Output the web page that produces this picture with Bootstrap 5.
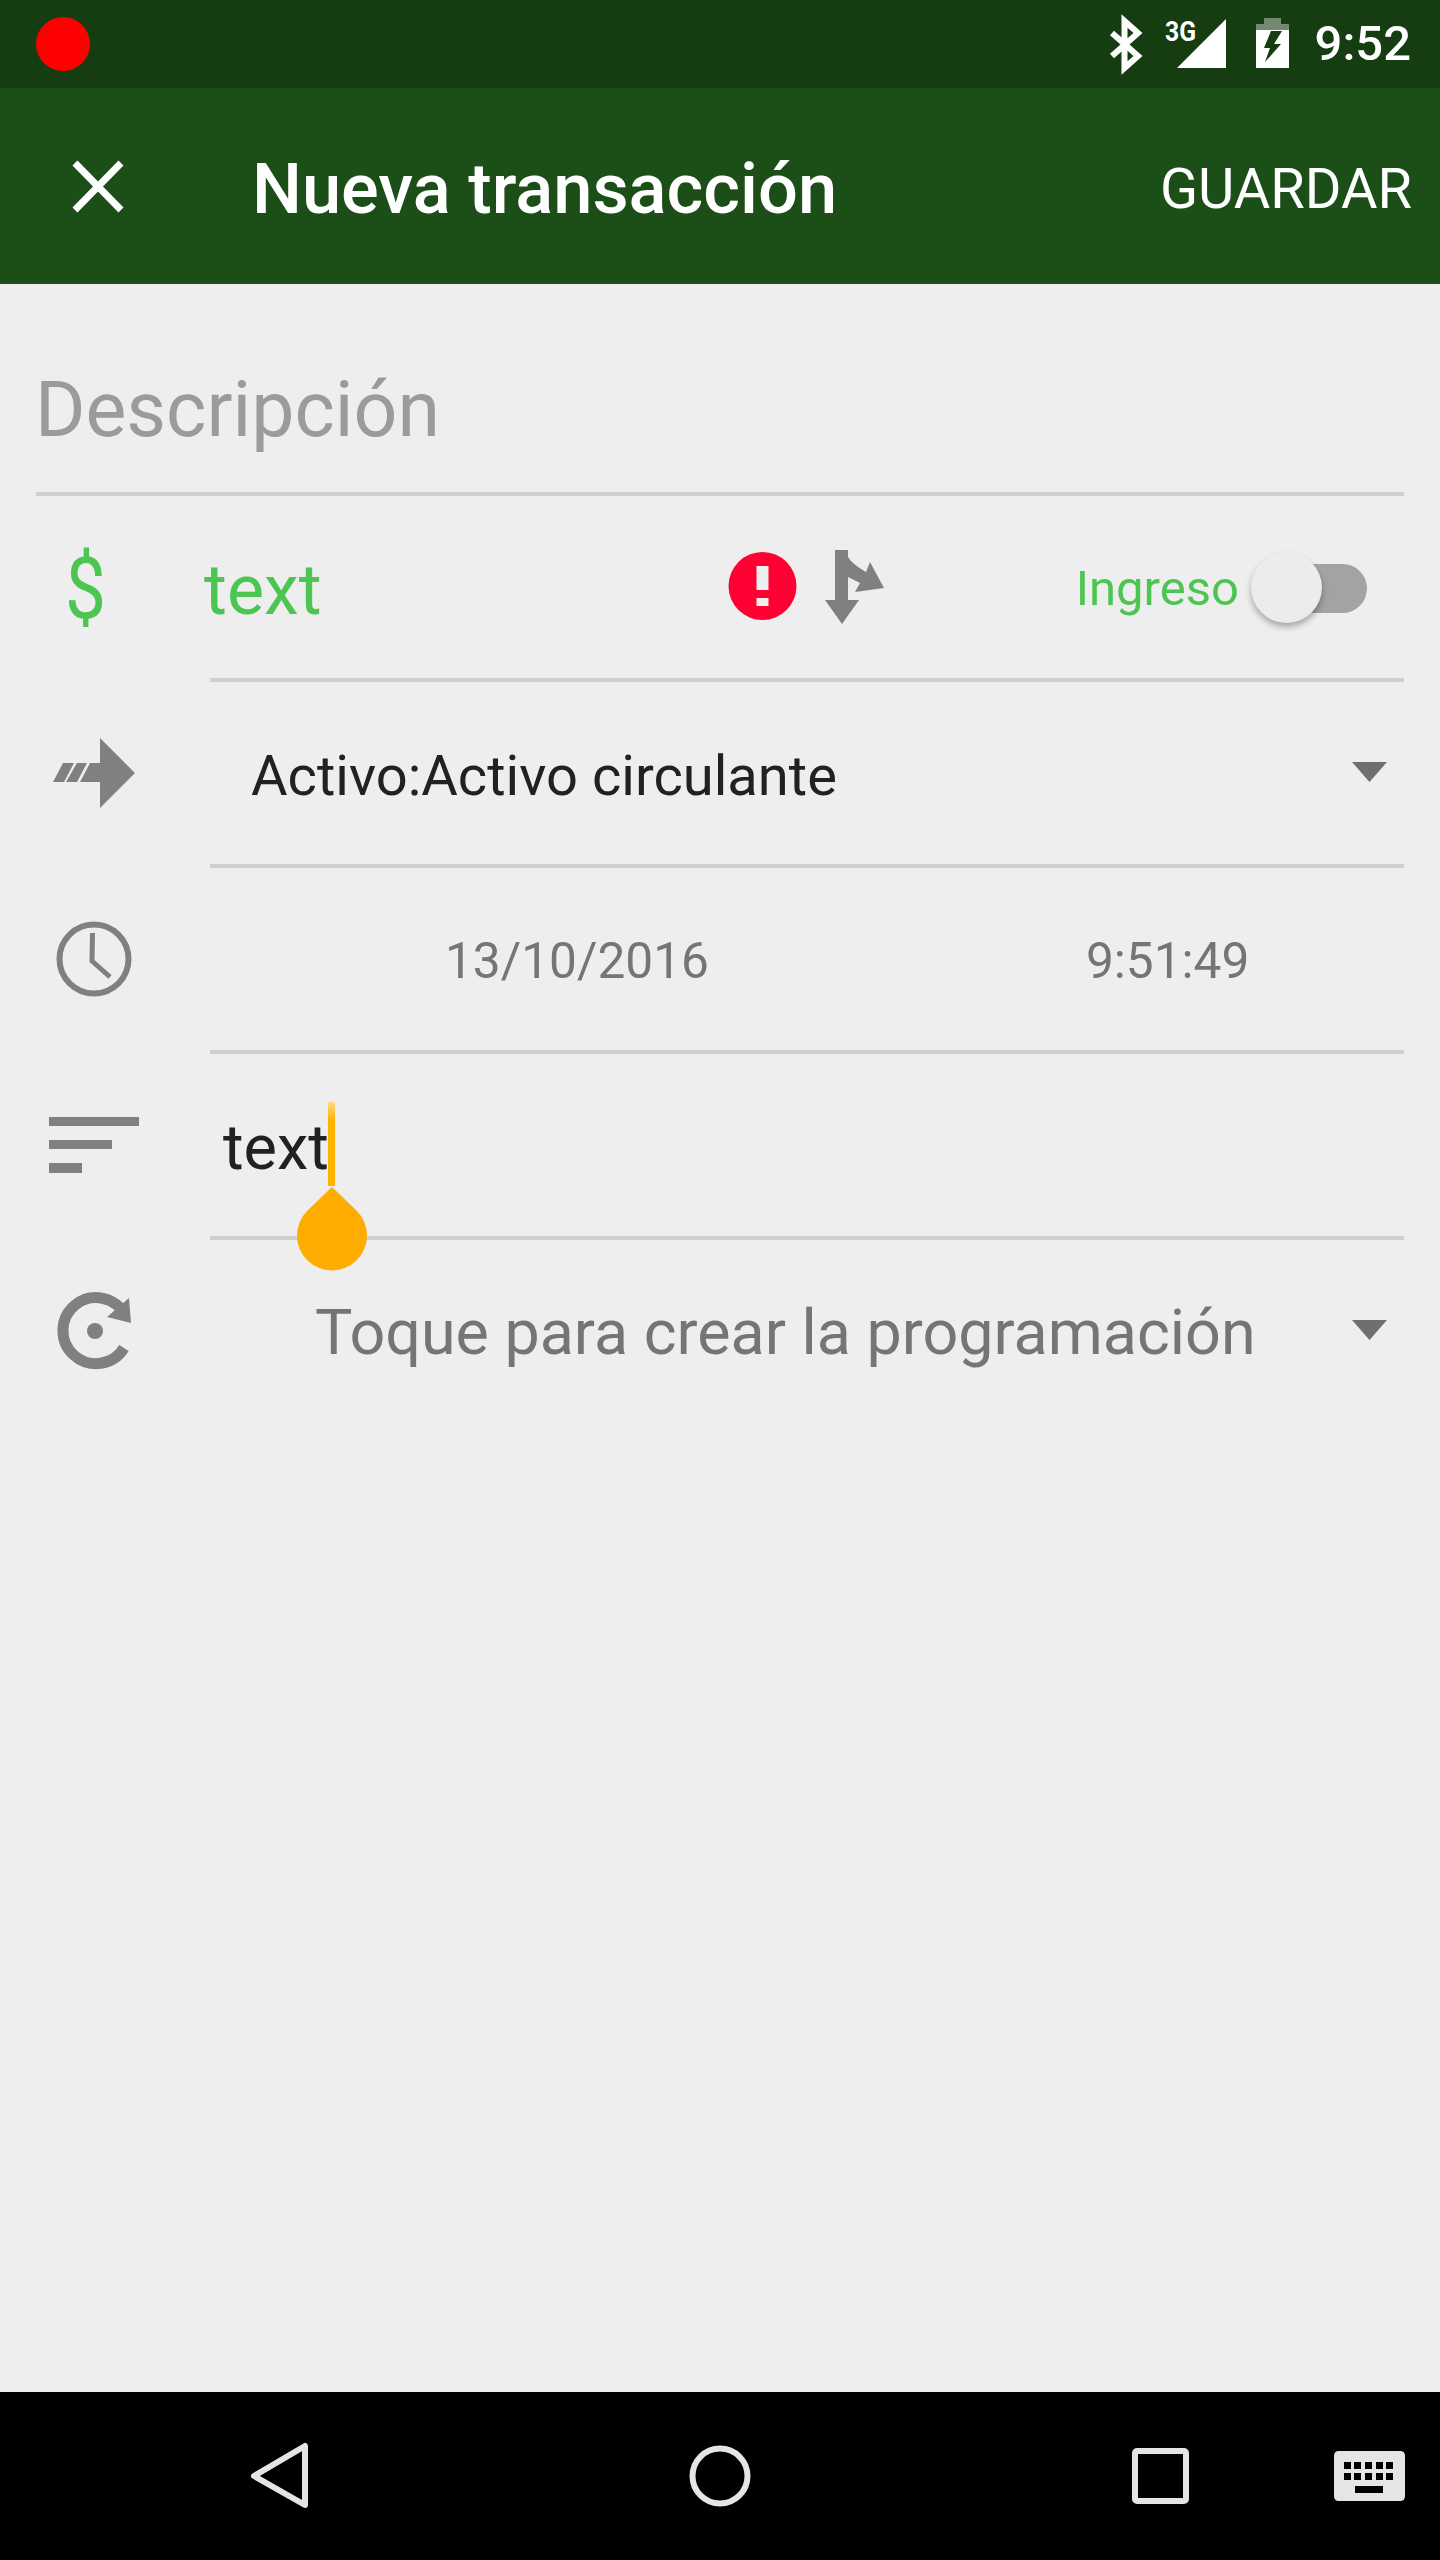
<!DOCTYPE html>
<html lang="es">
<head>
    <meta charset="UTF-8">
    <meta name="viewport" content="width=device-width, initial-scale=1.0">
    <title>Nueva transacción</title>
    <link rel="stylesheet" href="https://cdn.jsdelivr.net/npm/bootstrap@5.3.0/dist/css/bootstrap.min.css">
    <style>
        html, body { margin: 0; background: #eeeeee; }
        body { font-family: Roboto, "Liberation Sans", sans-serif; }
        .screen { width: 1440px; height: 2560px; background: #eeeeee; overflow: hidden; }
        .status-bar { height: 88px; background: #153d11; color: #fff; }
        .rec-dot { width: 54px; height: 54px; background: #f00; margin-left: 36px; }
        .status-time { font-size: 49px; font-weight: 500; line-height: 88px; margin-right: 29px; }
        .status-3g { font-family: Roboto, sans-serif; font-size: 28px; font-weight: 700; fill: #fff; }
        .app-toolbar { height: 196px; background: #1c4e18; color: #fff; padding: 0; }
        .close-icon { width: 252px; height: 196px; }
        .app-title { font-size: 70.4px; font-weight: 500; line-height: 202px; }
        .save-btn { font-size: 56px; line-height: 202px; margin-right: 28px; }
        .desc-block { height: 212px; margin: 0 36px; border-bottom: 4px solid #cfcfcf; }
        .desc-text { font-size: 77px; line-height: 90px; color: #9b9b9b; padding-top: 81px; margin-left: -1px; }
        .form-line { height: 186px; }
        .lead-ico { width: 210px; height: 186px; flex: none; }
        .line-body { width: 1194px; height: 186px; border-bottom: 4px solid #cfcfcf; position: relative; }
        .line-body.no-rule { border-bottom: 0; }
        .amount-text { font-size: 70px; color: #4cc552; line-height: 182px; margin-left: -6px; padding-top: 6px; }
        .dark-text { font-size: 56.1px; color: #212121; line-height: 182px; margin-left: 41px; padding-top: 6px; }
        .date-text { font-size: 49.6px; color: #757575; line-height: 182px; padding-top: 4px; }
        .date-a { margin-left: 235px; }
        .date-b { margin-left: 377px; }
        .notes-text { font-size: 63px; color: #212121; line-height: 182px; margin-left: 13px; padding-top: 6px; }
        .sched-text { font-size: 62.8px; color: #757575; line-height: 182px; margin-left: 105px; }
        .income-label { font-size: 49px; color: #4cc552; margin-left: auto; line-height: 182px; padding-top: 3px; }
        .toggle-wrap { width: 116px; height: 71px; position: relative; margin: 0 37px 0 12px; }
        .toggle-track { position: absolute; left: 14px; right: 0; top: 12px; height: 49px; border-radius: 25px; background: #a3a3a3; }
        .toggle-thumb { position: absolute; left: 0; top: 0; width: 71px; height: 71px; border-radius: 50%; background: #ececec; box-shadow: 0 4px 6px rgba(0,0,0,.3); }
        .caret-ico { position: absolute; left: 1142px; width: 35px; height: 20px; top: 80px; }
        .cursor-bar { position: absolute; left: 118px; top: 48px; width: 7px; height: 84px; background: linear-gradient(#ffd98a, #ffb300 22%); }
        .cursor-handle { position: absolute; left: 87px; top: 133px; width: 70px; height: 84px; }
        .nav-bar { height: 168px; background: #000; margin-top: auto; position: relative; }
        .nav-bar svg { display: block; }
        .badges-svg { left: 0; }
    </style>
</head>
<body>
    <div class="screen d-flex flex-column">
        <!-- barra de estado -->
        <div class="status-bar d-flex align-items-center flex-shrink-0">
            <div class="rec-dot rounded-circle"></div>
            <svg class="ms-auto" width="238" height="88" viewBox="1078 0 238 88">
                <path d="M1113 33 L1139 56 L1125.500 68 L1125.500 21 L1139 33 L1113 56" fill="none" stroke="#fff" stroke-width="6"/>
                <text class="status-3g" x="1166" y="41" textLength="31" lengthAdjust="spacingAndGlyphs">3G</text>
                <path d="M1178 68 L1227 19 L1227 68 Z" fill="#fff"/>
                <path d="M1265 18 H1282 V24 H1290 V30 H1257 V24 H1265 Z" fill="#fff" opacity=".4"/>
                <path fill-rule="evenodd" d="M1257 30 H1290 V68 H1257 Z M1272 31 L1265 48 L1271 48 L1266 62 L1282 44 L1275 44 L1283 31 Z" fill="#fff"/>
            </svg>
            <div class="status-time">9:52</div>
        </div>

        <!-- toolbar -->
        <div class="app-toolbar d-flex align-items-start flex-shrink-0">
            <svg class="close-icon flex-shrink-0" viewBox="0 88 252 196">
                <path d="M75 163 L121 210 M121 163 L75 210" stroke="#fff" stroke-width="7" fill="none"/>
            </svg>
            <div class="app-title">Nueva transacción</div>
            <div class="save-btn ms-auto">GUARDAR</div>
        </div>

        <div class="desc-block">
            <div class="desc-text">Descripción</div>
        </div>

        <!-- importe -->
        <div class="form-line d-flex">
            <div class="lead-ico d-flex">
                <svg width="210" height="186" viewBox="0 496 210 186">
                    <text x="65" y="618" font-family="Roboto, sans-serif" font-size="85" fill="#4cc552" textLength="41" lengthAdjust="spacingAndGlyphs">$</text>
                </svg>
            </div>
            <div class="line-body d-flex align-items-center">
                <div class="amount-text">text</div>
                <svg class="badges-svg position-absolute top-0" width="700" height="182" viewBox="210 496 700 182">
                    <circle cx="762.500" cy="586" r="34" fill="#ff0033"/>
                    <rect x="756.500" y="566" width="12" height="24" fill="#eee"/>
                    <rect x="756.500" y="598" width="12" height="8" fill="#eee"/>
                    <path d="M835 550 H848 V557 Q852 564 866 572 L870 562 L884 588 L855 592 L860 583 L848 577 V600 H859 L842 624 L825 600 H835 Z" fill="#808080"/>
                </svg>
                <div class="income-label">Ingreso</div>
                <div class="toggle-wrap">
                    <div class="toggle-track"></div>
                    <div class="toggle-thumb"></div>
                </div>
            </div>
        </div>

        <!-- cuenta -->
        <div class="form-line d-flex">
            <svg class="lead-ico" viewBox="0 682 210 186">
                <path d="M63 763 H74 L64 782 H53 Z M77 763 H87 L77 782 H66 Z M90 763 H100 V738 L135 773 L100 808 V782 H80 Z" fill="#808080"/>
            </svg>
            <div class="line-body d-flex align-items-center">
                <div class="dark-text">Activo:Activo circulante</div>
                <svg class="caret-ico" viewBox="0 0 35 20"><path d="M0 0 H35 L17.500 20 Z" fill="#6f6f6f"/></svg>
            </div>
        </div>

        <!-- fecha -->
        <div class="form-line d-flex">
            <svg class="lead-ico" viewBox="0 868 210 186">
                <circle cx="94" cy="959" r="34.500" fill="none" stroke="#808080" stroke-width="6"/>
                <path d="M92.500 933 L92 961 L110 977" fill="none" stroke="#808080" stroke-width="5"/>
            </svg>
            <div class="line-body d-flex align-items-center">
                <div class="date-text date-a">13/10/2016</div>
                <div class="date-text date-b">9:51:49</div>
            </div>
        </div>

        <!-- notas -->
        <div class="form-line d-flex">
            <svg class="lead-ico" viewBox="0 1054 210 186">
                <path d="M49 1117 H139 V1126 H49 Z M49 1140 H112 V1149 H49 Z M49 1163 H82 V1173 H49 Z" fill="#808080"/>
            </svg>
            <div class="line-body d-flex align-items-center">
                <div class="notes-text">text</div>
                <div class="cursor-bar"></div>
                <svg class="cursor-handle" viewBox="0 0 70 84"><path d="M35 0 L60 24 A35 35 0 1 1 10 24 Z" fill="#ffac00"/></svg>
            </div>
        </div>

        <!-- programacion -->
        <div class="form-line d-flex">
            <svg class="lead-ico" viewBox="0 1240 210 186">
                <path d="M125 1315 A33 33 0 1 0 124 1348" fill="none" stroke="#808080" stroke-width="11"/>
                <path d="M129 1298 L131 1323 L107 1317 Z" fill="#808080"/>
                <circle cx="95" cy="1331" r="8" fill="#808080"/>
            </svg>
            <div class="line-body no-rule d-flex align-items-center">
                <div class="sched-text">Toque para crear la programación</div>
                <svg class="caret-ico" viewBox="0 0 35 20"><path d="M0 0 H35 L17.500 20 Z" fill="#6f6f6f"/></svg>
            </div>
        </div>

        <!-- barra de navegacion -->
        <div class="nav-bar flex-shrink-0">
            <svg width="1440" height="168" viewBox="0 2392 1440 168">
                <path d="M305 2446 V2505 L254 2476 Z" fill="none" stroke="#e5e5e5" stroke-width="6" stroke-linejoin="round"/>
                <circle cx="720" cy="2476" r="27.500" fill="none" stroke="#e5e5e5" stroke-width="6"/>
                <rect x="1135" y="2451" width="51" height="50" rx="2" fill="none" stroke="#e5e5e5" stroke-width="6"/>
                <path fill-rule="evenodd" fill="#e5e5e5" d="M1339 2451 H1400 Q1405 2451 1405 2456 V2496 Q1405 2501 1400 2501 H1339 Q1334 2501 1334 2496 V2456 Q1334 2451 1339 2451 Z
                    M1344 2462 v7 h7 v-7 Z M1354 2462 v7 h7 v-7 Z M1365 2462 v7 h7 v-7 Z M1376 2462 v7 h7 v-7 Z M1386 2462 v7 h7 v-7 Z
                    M1344 2473 v7 h7 v-7 Z M1354 2473 v7 h7 v-7 Z M1365 2473 v7 h7 v-7 Z M1376 2473 v7 h7 v-7 Z M1386 2473 v7 h7 v-7 Z
                    M1355 2486 v7 h28 v-7 Z"/>
            </svg>
        </div>
    </div>
    <script src="https://cdn.jsdelivr.net/npm/bootstrap@5.3.0/dist/js/bootstrap.bundle.min.js"></script>
</body>
</html>
